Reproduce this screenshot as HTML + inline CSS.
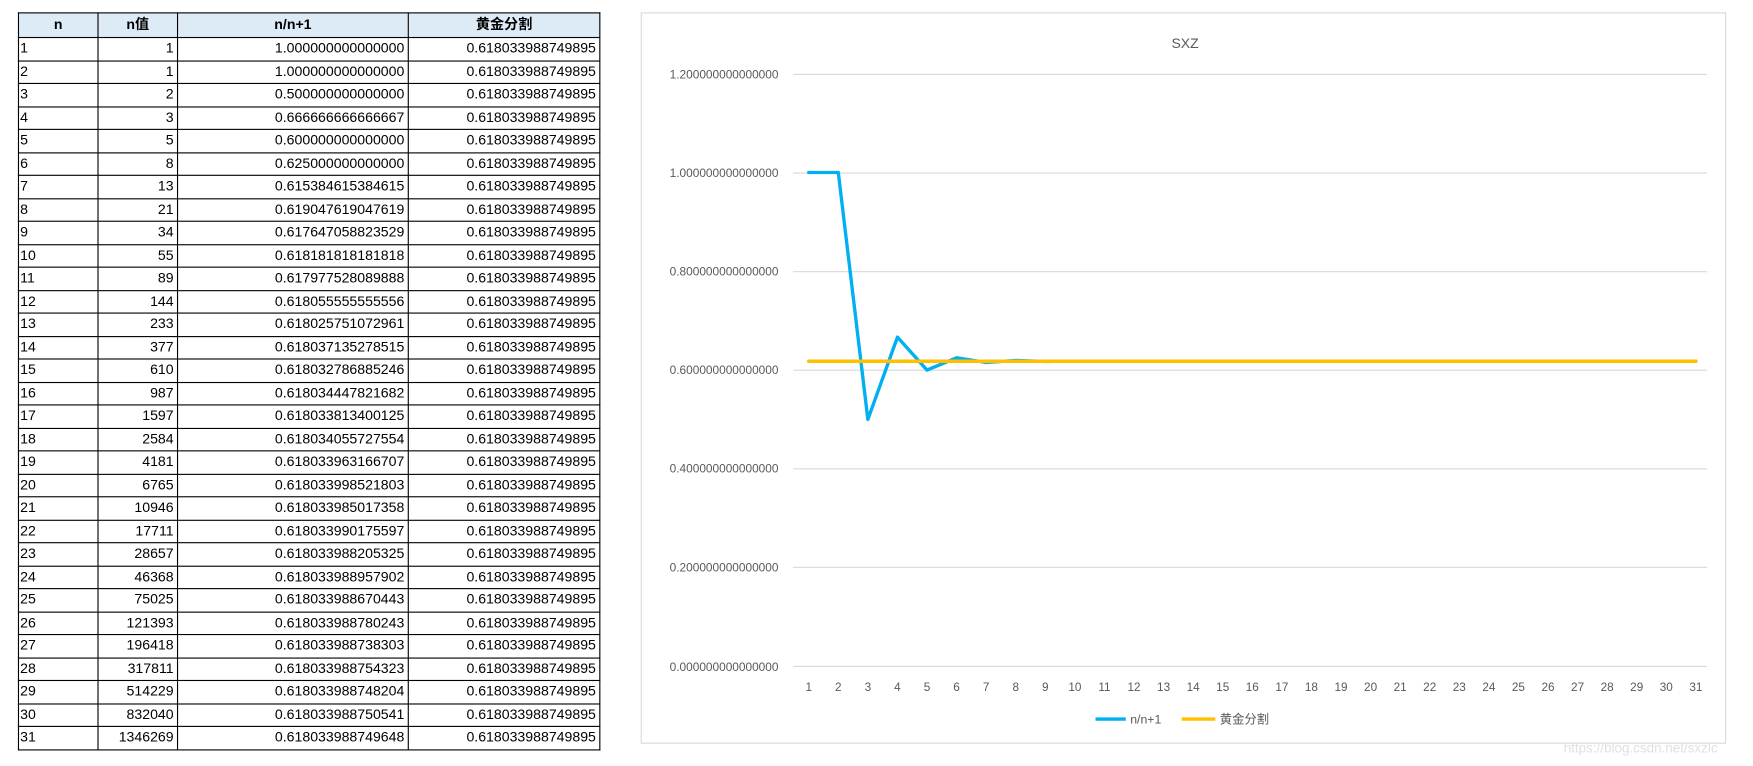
<!DOCTYPE html>
<html><head><meta charset="utf-8"><style>
html,body{margin:0;padding:0;background:#fff;overflow:hidden;width:1753px;height:766px}
#w{position:absolute;left:0;top:0;width:1565px;height:684px;transform:scale(1.12012);transform-origin:0 0}
table{position:absolute;left:16px;top:11px;width:519px;table-layout:fixed;border-collapse:collapse;font-family:"Liberation Sans","Noto Sans CJK SC",sans-serif;font-size:12.6px;color:#000}
td,th{border:1px solid #000;height:19.5px;padding:0 1px;line-height:19px;white-space:nowrap;overflow:hidden}
th{background:#ddebf7;font-weight:bold;height:21px;text-align:center;font-size:12.6px}
td{text-align:right;padding-right:3px}
td:first-child{text-align:left}
svg{position:absolute;left:0;top:0}
svg text{font-family:"Liberation Sans","Noto Sans CJK SC",sans-serif;fill:#595959}
</style></head><body><div id="w">
<table>
<colgroup><col style="width:71px"><col style="width:71px"><col style="width:206px"><col style="width:171px"></colgroup>
<tr><th>n</th><th>n值</th><th>n/n+1</th><th>黄金分割</th></tr>
<tr><td>1</td><td>1</td><td>1.000000000000000</td><td>0.618033988749895</td></tr>
<tr><td>2</td><td>1</td><td>1.000000000000000</td><td>0.618033988749895</td></tr>
<tr><td>3</td><td>2</td><td>0.500000000000000</td><td>0.618033988749895</td></tr>
<tr><td>4</td><td>3</td><td>0.666666666666667</td><td>0.618033988749895</td></tr>
<tr><td>5</td><td>5</td><td>0.600000000000000</td><td>0.618033988749895</td></tr>
<tr><td>6</td><td>8</td><td>0.625000000000000</td><td>0.618033988749895</td></tr>
<tr><td>7</td><td>13</td><td>0.615384615384615</td><td>0.618033988749895</td></tr>
<tr><td>8</td><td>21</td><td>0.619047619047619</td><td>0.618033988749895</td></tr>
<tr><td>9</td><td>34</td><td>0.617647058823529</td><td>0.618033988749895</td></tr>
<tr><td>10</td><td>55</td><td>0.618181818181818</td><td>0.618033988749895</td></tr>
<tr><td>11</td><td>89</td><td>0.617977528089888</td><td>0.618033988749895</td></tr>
<tr><td>12</td><td>144</td><td>0.618055555555556</td><td>0.618033988749895</td></tr>
<tr><td>13</td><td>233</td><td>0.618025751072961</td><td>0.618033988749895</td></tr>
<tr><td>14</td><td>377</td><td>0.618037135278515</td><td>0.618033988749895</td></tr>
<tr><td>15</td><td>610</td><td>0.618032786885246</td><td>0.618033988749895</td></tr>
<tr><td>16</td><td>987</td><td>0.618034447821682</td><td>0.618033988749895</td></tr>
<tr><td>17</td><td>1597</td><td>0.618033813400125</td><td>0.618033988749895</td></tr>
<tr><td>18</td><td>2584</td><td>0.618034055727554</td><td>0.618033988749895</td></tr>
<tr><td>19</td><td>4181</td><td>0.618033963166707</td><td>0.618033988749895</td></tr>
<tr><td>20</td><td>6765</td><td>0.618033998521803</td><td>0.618033988749895</td></tr>
<tr><td>21</td><td>10946</td><td>0.618033985017358</td><td>0.618033988749895</td></tr>
<tr><td>22</td><td>17711</td><td>0.618033990175597</td><td>0.618033988749895</td></tr>
<tr><td>23</td><td>28657</td><td>0.618033988205325</td><td>0.618033988749895</td></tr>
<tr><td>24</td><td>46368</td><td>0.618033988957902</td><td>0.618033988749895</td></tr>
<tr><td>25</td><td>75025</td><td>0.618033988670443</td><td>0.618033988749895</td></tr>
<tr><td>26</td><td>121393</td><td>0.618033988780243</td><td>0.618033988749895</td></tr>
<tr><td>27</td><td>196418</td><td>0.618033988738303</td><td>0.618033988749895</td></tr>
<tr><td>28</td><td>317811</td><td>0.618033988754323</td><td>0.618033988749895</td></tr>
<tr><td>29</td><td>514229</td><td>0.618033988748204</td><td>0.618033988749895</td></tr>
<tr><td>30</td><td>832040</td><td>0.618033988750541</td><td>0.618033988749895</td></tr>
<tr><td>31</td><td>1346269</td><td>0.618033988749648</td><td>0.618033988749895</td></tr>
</table>
<svg width="1565" height="684" viewBox="0 0 1565 684">
<rect x="572.5" y="11.5" width="968" height="652" fill="#fff" stroke="#d9d9d9"/>
<text x="1058" y="43" font-size="12.5" text-anchor="middle">SXZ</text>
<g stroke="#d9d9d9" stroke-width="1">
<line x1="708" x2="1524" y1="66.5" y2="66.5"/>
<line x1="708" x2="1524" y1="154.5" y2="154.5"/>
<line x1="708" x2="1524" y1="242.5" y2="242.5"/>
<line x1="708" x2="1524" y1="330.5" y2="330.5"/>
<line x1="708" x2="1524" y1="418.5" y2="418.5"/>
<line x1="708" x2="1524" y1="506.5" y2="506.5"/>
<line x1="708" x2="1524" y1="595" y2="595"/>
</g>
<g font-size="10.6" text-anchor="end">
<text x="695" y="70">1.200000000000000</text>
<text x="695" y="158">1.000000000000000</text>
<text x="695" y="246">0.800000000000000</text>
<text x="695" y="334">0.600000000000000</text>
<text x="695" y="422">0.400000000000000</text>
<text x="695" y="510">0.200000000000000</text>
<text x="695" y="599">0.000000000000000</text>
</g>
<g font-size="10.5" text-anchor="middle">
<text x="722" y="617">1</text><text x="748.4" y="617">2</text><text x="774.8" y="617">3</text><text x="801.2" y="617">4</text><text x="827.6" y="617">5</text><text x="854" y="617">6</text><text x="880.4" y="617">7</text><text x="906.8" y="617">8</text><text x="933.2" y="617">9</text><text x="959.6" y="617">10</text><text x="986" y="617">11</text><text x="1012.4" y="617">12</text><text x="1038.8" y="617">13</text><text x="1065.2" y="617">14</text><text x="1091.6" y="617">15</text><text x="1118" y="617">16</text><text x="1144.4" y="617">17</text><text x="1170.8" y="617">18</text><text x="1197.2" y="617">19</text><text x="1223.6" y="617">20</text><text x="1250" y="617">21</text><text x="1276.4" y="617">22</text><text x="1302.8" y="617">23</text><text x="1329.2" y="617">24</text><text x="1355.6" y="617">25</text><text x="1382" y="617">26</text><text x="1408.4" y="617">27</text><text x="1434.8" y="617">28</text><text x="1461.2" y="617">29</text><text x="1487.6" y="617">30</text><text x="1514" y="617">31</text>
</g>
<polyline fill="none" stroke="#00b0f0" stroke-width="3" stroke-linejoin="round" stroke-linecap="round" points="722,154 748.4,154 774.8,374.5 801.2,301 827.6,330.4 854,319.4 880.4,323.6 906.8,321.8 933.2,322.7 959.6,322.4 1514,322.5"/>
<line x1="722" x2="1514" y1="322.5" y2="322.5" stroke="#ffc000" stroke-width="3.2" stroke-linecap="round"/>
<line x1="978" x2="1005" y1="642" y2="642" stroke="#00b0f0" stroke-width="3"/>
<text x="1009" y="646" font-size="11">n/n+1</text>
<line x1="1055" x2="1085" y1="642" y2="642" stroke="#ffc000" stroke-width="3"/>
<text x="1089" y="646" font-size="11">黄金分割</text>
<text x="1396" y="672" font-size="12" style="fill:#e0e0e0">https://blog.csdn.net/sxzlc</text>
</svg>
</div></body></html>
